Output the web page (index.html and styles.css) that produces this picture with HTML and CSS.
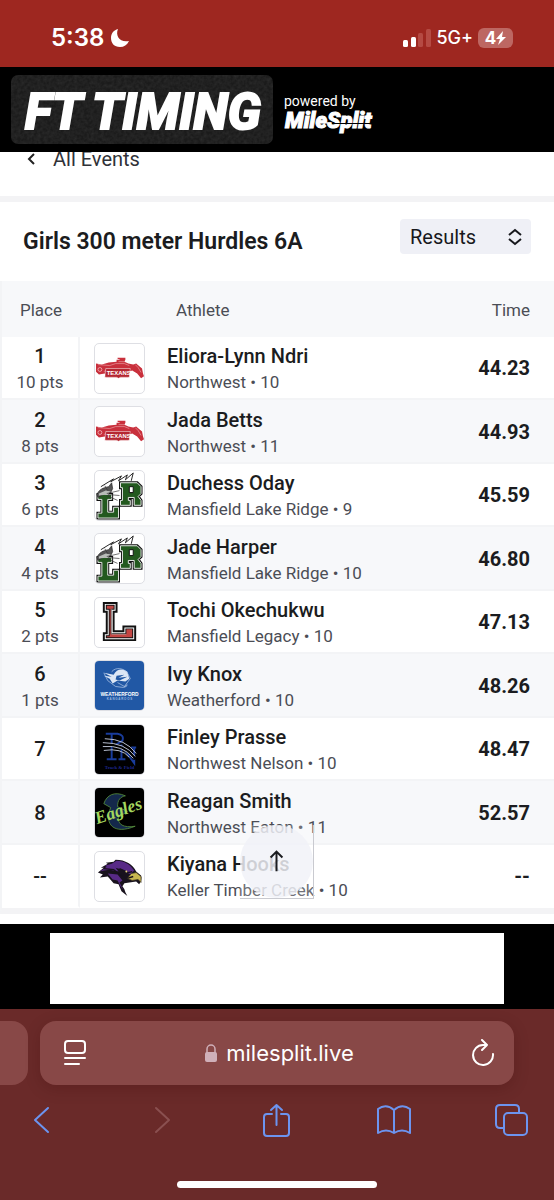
FILE: index.html
```
<!DOCTYPE html>
<html lang="en">
  <head>
    <meta charset="UTF-8" />
    <meta name="viewport" content="width=device-width, initial-scale=1" />
    <title>Girls 300 meter Hurdles 6A</title>
    <link rel="stylesheet" href="styles.css">
  </head>

  <body>
    <!-- team logos -->
    <svg class="sprites" aria-hidden="true">
      <symbol id="texans" viewBox="0 0 50 50">
        <path fill="#c9303c" d="M1 20l6 1 7-2 8-1v-2h4l-3-1v-1h8v2l-1 2 4 2 5 1 3-1 6 5 1 5 1 3-3 2-4-5-5-3-3 1-1 6H11l-1-4-6 1-3-3z" />
        <circle cx="5" cy="26" r="4" fill="#c9303c" />
        <circle cx="5" cy="26" r="2" fill="none" stroke="#f2b8bc" stroke-width=".8" />
        <path fill="none" stroke="#f4c6c8" stroke-width=".5" d="M3 21l12 1 6-2h9l5 2M24 18h6M41 21l3 3 3 5M9 28l3-1" />
        <path fill="#b52731" stroke="#fff" stroke-width=".5" d="M11 25h25l-1 9h-9l-2 1-2-1H10z" />
        <text x="12" y="32" class="logo-sans" font-size="6" fill="#fff">TEXANS</text>
      </symbol>
      <symbol id="ridge" viewBox="0 0 50 50">
        <path fill="#fff" stroke="#222" stroke-width="1" d="M6 16L19 8 16 11l11-6-3 5 9-6-2 5 8-7-2 8" />
        <path fill="#173d19" stroke="#111" stroke-width="3" d="M26 12h17l4 4v7l-3 3 3 4v5h-7v-8h-6v3h2v5H26v-5h2V17h-2z" />
        <path fill="#23591f" stroke="#e8ece8" stroke-width="1" d="M26 12h17l4 4v7l-3 3 3 4v5h-7v-8h-6v3h2v5H26v-5h2V17h-2z" />
        <path fill="#fff" stroke="#111" d="M35 16h4v6h-4z" />
        <path fill="#23591f" stroke="#111" stroke-width="3" d="M3 24h14v5h-4v13h6v-5h5v11H3v-5h4V29H3z" />
        <path fill="#23591f" stroke="#e8ece8" stroke-width="1" d="M3 24h14v5h-4v13h6v-5h5v11H3v-5h4V29H3z" />
        <path fill="#555" stroke="#222" stroke-width=".7" d="M2 24c2-5 6-7 12-8l3-4 1 6-2 4-8 2-5 3z" />
        <path fill="#b8bdb8" d="M4 23l7-3 5 1-3 3-9 1z" />
        <path fill="none" stroke="#333" stroke-width=".7" d="M12 23l13-3M13 24l12 1M12 25l11 5M10 15l3 5" />
      </symbol>
      <symbol id="legacy" viewBox="0 0 50 50">
        <path fill="#111" d="M8 4h15v11h-3v18h8v-5h14v16H8v-9h3V15H8z" />
        <path fill="#fff" d="M10 6h11v7h-3v22h12v-5h10v12H10v-5h3V13h-3z" />
        <path fill="#111" d="M11 7h9v5h-3v24h14v-5h8v10H11v-3h3V12h-3z" />
        <path fill="#c34643" d="M12 8h7v3h-3v26h16v-5h6v8H12v-1h3V11h-3z" />
        <path fill="none" stroke="#ead3cf" stroke-width=".5" d="M17 11v26h15" />
      </symbol>
      <symbol id="weatherford" viewBox="0 0 50 50">
        <path fill="#2158a5" d="M0 0h50v50H0z" />
        <path fill="#dce7f5" d="M9 12l10 2c3-6 9-7 14-3l2 7-4 3-8-1-5 3-3-5-6-3 8 1z" />
        <path fill="none" stroke="#b8cdea" stroke-width=".7" d="M17 11c4-5 12-4 16 1l3 6-6 8-7-4M9 12l4 8 8 6 8 1 4-3M30 27l3-2" />
        <path fill="#2158a5" d="M22 15l8-1-6 3 9-1-8 4-4-1z" />
        <text x="25" y="36" class="logo-sans" text-anchor="middle" font-size="5" fill="#fff">WEATHERFORD</text>
        <text x="25" y="40" class="logo-sans" text-anchor="middle" font-size="3" fill="#9ebbe0">K A N G A R O O S</text>
      </symbol>
      <symbol id="nelson" viewBox="0 0 50 50">
        <path fill="#000" d="M0 0h50v50H0z" />
        <path fill="none" stroke="#193c9c" stroke-width="2" d="M11 9h12q7 1 5 7l-8 5M17 10v24M12 35h10M27 20v14M24 35h7M28 22l12 17V24M37 23h5" />
        <path fill="none" stroke="#000" stroke-width="3" d="M8 20q22-1 33 15" />
        <path fill="none" stroke="#b9bfd0" stroke-width="1" d="M10 14q21 0 32 15M8 18q23 0 33 14M8 22q21-2 31 12M9 26q18-3 26 7" />
        <text x="25" y="45" class="logo-serif" text-anchor="middle" font-size="5" fill="#1c2791">Track &amp; Field</text>
      </symbol>
      <symbol id="eaton" viewBox="0 0 50 50">
        <path fill="#000" d="M0 0h50v50H0z" />
        <path fill="#14284b" stroke="#5b963d" stroke-width=".8" d="M31 8C20 3 12 7 9 16l7 4C9 37 19 48 41 39c-12 2-18-2-17-9l9-6-10-5c0-7 3-10 8-11z" />
        <text x="2" y="37" class="logo-script" font-size="18" fill="#a4d65e" transform="rotate(-19 2 37)">Eagles</text>
      </symbol>
      <symbol id="creek" viewBox="0 0 50 50">
        <path fill="#18121d" d="M3 21l6-5h-3l7-4-2-1 8-1 2-2c10 0 18 5 21 12l5 4c1 3 0 7-2 9l-3-3-7 1-5 1-2 3 2 3 1 3 2 4-6-5-3-7-5-1-6-7-8 1 3-3z" />
        <path fill="#582a86" d="M5 20l7-5-2-1 7-2 5-3c8 0 14 4 18 10l-4 4-8-5-7-2 3 4-9-2-6 1z" />
        <path fill="#582a86" d="M13 22l10 1 5 6-3 2 4 8-3-4-3-6-5-1z" />
        <path fill="#c8b751" stroke="#3b3320" stroke-width=".7" d="M37 22l5-1 5 4v6l-3-3-6 1-5-2z" />
        <path fill="none" stroke="#17111c" stroke-width="1.4" d="M25 17l9 4 4-1M9 17l10 1 9 7M33 27l6-2" />
        <circle cx="32" cy="20" r="1" fill="#e9d879" />
      </symbol>
    </svg>

    <div class="status-bar">
      <div class="clock">
        <span>5:38</span>
        <svg width="20" height="20" viewBox="0 0 20 20"><path fill="#fff" d="M8 1C5 8 10 15 19 13 17 17 14 19 10 19 4 19 1 15 1 10 1 5 4 2 8 1z" /></svg>
      </div>
      <div class="signal">
        <svg width="28" height="18" viewBox="0 0 28 18">
          <rect y="11" width="5" height="7" rx="1.5" fill="#fff" />
          <rect x="8" y="8" width="5" height="10" rx="1.5" fill="#fff" />
          <rect x="15" y="4" width="5" height="14" rx="1.5" fill="#b54a43" />
          <rect x="23" width="5" height="18" rx="1.5" fill="#b54a43" />
        </svg>
        <span class="network">5G+</span>
        <span class="battery">4<svg width="10" height="14" viewBox="0 0 10 14"><path fill="#fff" d="M7 0L0 8h4l-2 6 8-8H6z" /></svg></span>
      </div>
    </div>

    <header class="brand-bar">
      <svg class="brand" width="262" height="69" viewBox="0 0 262 69" role="img" aria-label="FT Timing">
        <filter id="grain"><feTurbulence type="fractalNoise" baseFrequency=".3" numOctaves="2" /><feColorMatrix values="0 0 0 0 1  0 0 0 0 1  0 0 0 0 1  .35 0 0 0 -.08" /></filter>
        <clipPath id="plate"><rect width="262" height="69" rx="7" /></clipPath>
        <g clip-path="url(#plate)">
          <rect width="262" height="69" fill="#1b1b1b" />
          <rect width="262" height="69" filter="url(#grain)" opacity=".3" />
        </g>
        <text x="14" y="54" class="brand-text">FT TIMING</text>
      </svg>
      <div class="powered">
        <span>powered by</span>
        <svg width="100" height="25" viewBox="0 0 100 25" role="img" aria-label="MileSplit">
          <text x="1" y="19" class="split-text">MileSplit</text>
          <path stroke="#000" d="M48 14.500h44" />
        </svg>
      </div>
    </header>

    <main class="page">
      <a class="back" href="#">
        <svg width="10" height="14" viewBox="0 0 10 14"><path fill="none" stroke="#222" stroke-width="2" d="M8 2L3 7l5 5" /></svg>
        All Events
      </a>

      <div class="event">
        <h1>Girls 300 meter Hurdles 6A</h1>
        <div class="picker">
          <select aria-label="View">
            <option>Results</option>
          </select>
          <svg width="16" height="18" viewBox="0 0 16 18"><path fill="none" stroke="#17181c" stroke-width="2" d="M2 7l6-5 6 5M2 11l6 5 6-5" /></svg>
        </div>
      </div>

      <table class="results">
        <thead>
          <tr>
            <th class="place">Place</th>
            <th class="athlete-head" colspan="2">Athlete</th>
            <th class="time">Time</th>
          </tr>
        </thead>
        <tbody>
          <tr>
            <td class="place"><b>1</b><span>10 pts</span></td>
            <td class="team"><svg class="logo"><use href="#texans" /></svg></td>
            <td class="athlete"><b>Eliora-Lynn Ndri</b><span>Northwest • 10</span></td>
            <td class="time">44.23</td>
          </tr>
          <tr>
            <td class="place"><b>2</b><span>8 pts</span></td>
            <td class="team"><svg class="logo"><use href="#texans" /></svg></td>
            <td class="athlete"><b>Jada Betts</b><span>Northwest • 11</span></td>
            <td class="time">44.93</td>
          </tr>
          <tr>
            <td class="place"><b>3</b><span>6 pts</span></td>
            <td class="team"><svg class="logo"><use href="#ridge" /></svg></td>
            <td class="athlete"><b>Duchess Oday</b><span>Mansfield Lake Ridge • 9</span></td>
            <td class="time">45.59</td>
          </tr>
          <tr>
            <td class="place"><b>4</b><span>4 pts</span></td>
            <td class="team"><svg class="logo"><use href="#ridge" /></svg></td>
            <td class="athlete"><b>Jade Harper</b><span>Mansfield Lake Ridge • 10</span></td>
            <td class="time">46.80</td>
          </tr>
          <tr>
            <td class="place"><b>5</b><span>2 pts</span></td>
            <td class="team"><svg class="logo"><use href="#legacy" /></svg></td>
            <td class="athlete"><b>Tochi Okechukwu</b><span>Mansfield Legacy • 10</span></td>
            <td class="time">47.13</td>
          </tr>
          <tr>
            <td class="place"><b>6</b><span>1 pts</span></td>
            <td class="team"><svg class="logo"><use href="#weatherford" /></svg></td>
            <td class="athlete"><b>Ivy Knox</b><span>Weatherford • 10</span></td>
            <td class="time">48.26</td>
          </tr>
          <tr>
            <td class="place"><b>7</b></td>
            <td class="team"><svg class="logo"><use href="#nelson" /></svg></td>
            <td class="athlete"><b>Finley Prasse</b><span>Northwest Nelson • 10</span></td>
            <td class="time">48.47</td>
          </tr>
          <tr>
            <td class="place"><b>8</b></td>
            <td class="team"><svg class="logo"><use href="#eaton" /></svg></td>
            <td class="athlete"><b>Reagan Smith</b><span>Northwest Eaton • 11</span></td>
            <td class="time">52.57</td>
          </tr>
          <tr>
            <td class="place"><b>--</b></td>
            <td class="team"><svg class="logo"><use href="#creek" /></svg></td>
            <td class="athlete"><b>Kiyana Hooks</b><span>Keller Timber Creek • 10</span></td>
            <td class="time">--</td>
          </tr>
        </tbody>
      </table>

      <button class="to-top" type="button" aria-label="Back to top">
        <svg width="73" height="73" viewBox="0 0 74 74">
          <circle cx="37" cy="37" r="37" fill="#f0f1f7" fill-opacity=".8" />
          <path fill="none" stroke="#1b1c20" stroke-width="2" d="M37 47V27M31 33l6-6 6 6" />
        </svg>
      </button>
    </main>

    <div class="ad"><div class="ad-slot"></div></div>

    <footer class="browser">
      <div class="tabs">
        <div class="prev-tab"></div>
        <div class="address">
          <button type="button" aria-label="Page menu">
            <svg width="24" height="28" viewBox="0 0 24 28"><g fill="none" stroke="#fff" stroke-width="2" stroke-linecap="round"><rect x="2" y="2" width="20" height="12" rx="3" /><path d="M2 19h20M2 25h14" /></g></svg>
          </button>
          <a href="#">
            <svg width="14" height="18" viewBox="0 0 14 18"><rect x="1" y="8" width="12" height="10" rx="2" fill="#d0b0b9" /><path fill="none" stroke="#d0b0b9" stroke-width="1.5" d="M3 9V5a4 4 0 0 1 8 0v4" /></svg>
            milesplit.live
          </a>
          <button type="button" aria-label="Reload">
            <svg width="24" height="28" viewBox="0 0 24 28"><path fill="none" stroke="#fff" stroke-width="2" stroke-linecap="round" stroke-linejoin="round" d="M22 15A10 10 0 1 1 12 6h4M11 1l5 5-5 5" /></svg>
          </button>
        </div>
      </div>
      <nav class="toolbar">
        <button type="button" aria-label="Back"><svg viewBox="0 0 34 34"><path d="M24 5L11 17l13 12" /></svg></button>
        <button type="button" aria-label="Forward" disabled><svg viewBox="0 0 34 34"><path d="M14 5l13 12-13 12" /></svg></button>
        <button type="button" aria-label="Share"><svg viewBox="0 0 34 34"><path d="M13 11H8q-3 0-3 3v16q0 3 3 3h19q3 0 3-3V14q0-3-3-3h-5M17.500 22V2M12 7l5.500-5L23 7" /></svg></button>
        <button type="button" aria-label="Bookmarks"><svg viewBox="0 0 34 34"><path d="M17 7Q9 0 1 6v24q8-5 16 0 8-5 16 0V6q-8-6-16 1v23" /></svg></button>
        <button type="button" aria-label="Tabs"><svg viewBox="0 0 34 34"><rect x="10" y="10" width="23" height="22" rx="4" /><path d="M10 25H6q-4 0-4-4V6q0-4 4-4h15q4 0 4 4v4" /></svg></button>
      </nav>
      <div class="home-line"></div>
    </footer>
  </body>
</html>
```
FILE: styles.css
```
* {
  box-sizing: border-box;
}

body {
  margin: 0;
  background: #fff;
  color: #1b1c20;
  font-family: Roboto, sans-serif;
}

button {
  padding: 0;
  border: 0;
  background: none;
}

svg {
  display: block;
}

.sprites {
  display: none;
}

/* status bar */
.status-bar {
  display: flex;
  align-items: center;
  justify-content: space-between;
  height: 67px;
  padding: 8px 41px 0 51px;
  background: #9e2720;
  color: #fff;
  font-family: Inter, sans-serif;
}

.clock {
  display: flex;
  align-items: center;
  gap: 6px;
  font-size: 24px;
  font-weight: 600;
}

.signal {
  display: flex;
  align-items: center;
  gap: 5px;
}

.network {
  font-size: 18px;
  font-weight: 500;
}

.battery {
  display: flex;
  align-items: center;
  justify-content: center;
  width: 35px;
  height: 20px;
  border-radius: 6px;
  background: #bd6762;
  font-size: 17px;
  font-weight: 700;
}

/* header */
.brand-bar {
  position: relative;
  z-index: 1;
  display: flex;
  align-items: center;
  gap: 11px;
  height: 85px;
  padding-left: 11px;
  background: #000;
  color: #fff;
}

.brand-text {
  fill: #fff;
  stroke: #fff;
  stroke-width: 2px;
  font: italic 800 50px Roboto, sans-serif;
}

.powered {
  padding-top: 8px;
  font-size: 14px;
  line-height: 16px;
}

.split-text {
  fill: #fff;
  stroke: #fff;
  stroke-width: 1px;
  font: italic 900 22px Roboto, sans-serif;
}

/* page */
.page {
  position: relative;
  padding-bottom: 10px;
}

.back {
  display: flex;
  align-items: center;
  gap: 17px;
  height: 28px;
  margin-top: -7px;
  padding-left: 26px;
  color: #303238;
  font-size: 20px;
  text-decoration: none;
}

.event {
  display: flex;
  align-items: center;
  justify-content: space-between;
  height: 85px;
  margin-top: 23px;
  padding: 0 23px;
  border-top: 6px solid #f3f3f5;
}

.event h1 {
  margin: 0;
  font-size: 23px;
  font-weight: 600;
}

.picker {
  display: grid;
  align-items: center;
  width: 131px;
  margin-bottom: 10px;
}

.picker select,
.picker svg {
  grid-area: 1 / 1;
}

.picker select {
  width: 100%;
  height: 35px;
  padding: 0 10px;
  border: 0;
  border-radius: 4px;
  appearance: none;
  background: #eff0f6;
  color: #17181c;
  font: 20px Roboto, sans-serif;
}

.picker svg {
  justify-self: end;
  margin-right: 8px;
  pointer-events: none;
}

/* results table */
.results {
  width: 100%;
  border-collapse: separate;
  border-spacing: 0;
  border-left: 2px solid #f3f4f6;
  border-bottom: 6px solid #f3f3f5;
}

.results th {
  height: 56px;
  padding: 2px 0 0;
  background: #f7f8fa;
  color: #4b4d55;
  font-size: 17px;
  font-weight: 400;
  text-align: left;
}

.results td {
  height: 63px;
  padding: 1px 0 0;
  border-bottom: 2px solid #f3f4f6;
}

.results tbody tr:nth-child(even) td {
  height: 64px;
  background: #f7f8fa;
}

.results tbody tr:last-child td {
  border-bottom-color: #fff;
}

.results b,
.results td span {
  display: block;
}

.results b {
  font-size: 20px;
  line-height: 28px;
  font-weight: 500;
}

.results td span {
  color: #4b4d55;
  font-size: 17px;
  line-height: 24px;
}

.results .place {
  width: 78px;
  text-align: center;
}

.results td.place {
  border-right: 2px solid #f3f4f6;
}

.results .team {
  width: 87px;
  padding-left: 14px;
}

.results .athlete-head {
  padding-left: 96px;
}

.results .time {
  padding-right: 24px;
  text-align: right;
}

.results td.time {
  font-size: 20px;
  font-weight: 700;
}

.logo {
  width: 51px;
  height: 51px;
  border: 1px solid #dedfe4;
  border-radius: 5px;
  background: #fff;
}

.logo-sans {
  font-family: "Liberation Sans", sans-serif;
  font-weight: 700;
}

.logo-serif {
  font-family: "Liberation Serif", serif;
  font-weight: 700;
}

.logo-script {
  font-family: "Liberation Serif", serif;
  font-style: italic;
  font-weight: 700;
}

.to-top {
  position: absolute;
  left: 50%;
  bottom: 25px;
  margin-left: -37px;
  border-right: 1px solid #c9cad0;
  border-bottom: 1px solid #c9cad0;
  background: rgba(255, 255, 255, 0.2);
}

/* ad */
.ad {
  padding: 9px 50px 5px;
  background: #000;
}

.ad-slot {
  height: 71px;
  background: #fff;
}

/* browser controls */
.browser {
  padding: 12px 0;
  background: #6a2a29;
}

.tabs {
  display: flex;
  gap: 12px;
  padding-right: 40px;
}

.prev-tab {
  width: 28px;
  border-radius: 0 16px 16px 0;
  background: #884847;
}

.address {
  display: flex;
  flex: 1;
  align-items: center;
  justify-content: space-between;
  height: 64px;
  padding: 0 19px 0 23px;
  border-radius: 16px;
  background: #884847;
  box-shadow: 0 4px 16px rgba(50, 0, 0, 0.2);
}

.address a {
  display: flex;
  align-items: center;
  gap: 8px;
  color: #fff;
  font: 22px Inter, sans-serif;
  text-decoration: none;
}

.toolbar {
  display: flex;
  justify-content: space-between;
  padding: 18px 26px 0 24px;
}

.toolbar svg {
  width: 34px;
  height: 34px;
  fill: none;
  stroke: #6c94ef;
  stroke-width: 2px;
  stroke-linecap: round;
  stroke-linejoin: round;
}

.toolbar button:disabled svg {
  stroke: #8a5050;
}

.home-line {
  width: 36%;
  height: 7px;
  margin: 44px auto 0;
  border-radius: 4px;
  background: #fff;
}
```
